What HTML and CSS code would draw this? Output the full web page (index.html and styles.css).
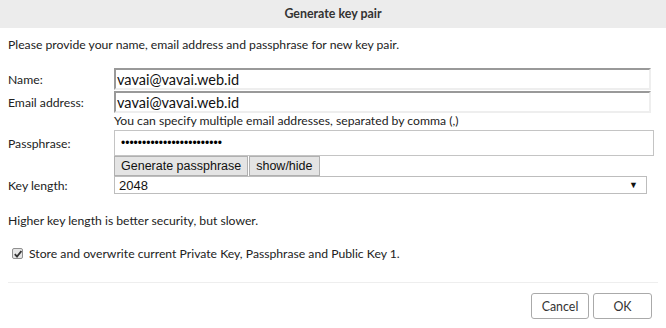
FILE: index.html
```html
<!DOCTYPE html>
<html lang="en">
<head>
    <meta charset="UTF-8">
    <title>Generate key pair</title>
    <link rel="stylesheet" href="styles.css">
</head>
<body>
    <div class="dialog">
        <div class="title-bar">Generate key pair</div>
        <div class="content">
            <p class="intro">Please provide your name, email address and passphrase for new key pair.</p>

            <div class="form-row name-row">
                <label class="label" for="nameInput">Name:</label>
                <input type="text" class="text-input" id="nameInput" value="vavai@vavai.web.id">
            </div>
            <div class="form-row">
                <label class="label" for="emailInput">Email address:</label>
                <input type="text" class="text-input" id="emailInput" value="vavai@vavai.web.id">
            </div>
            <div class="hint">You can specify multiple email addresses, separated by comma (,)</div>

            <div class="form-row pass-row">
                <label class="label" for="passInput">Passphrase:</label>
                <input type="password" class="pass-input" id="passInput" value="abcdefghijklmnopqrstuvwx">
            </div>
            <div class="pass-buttons">
                <button class="small-btn">Generate passphrase</button>
                <button class="small-btn">show/hide</button>
            </div>
            <div class="form-row key-row">
                <span class="label">Key length:</span>
                <div class="select-box">
                    <span>2048</span>
                    <span class="arrow">&#9660;</span>
                </div>
            </div>

            <p class="note">Higher key length is better security, but slower.</p>

            <label class="store-row">
                <span class="check-box">
                    <svg width="8" height="8" viewBox="0 0 8 8">
                        <path d="M0.8 4.2 L3 6.6 L7.4 1" fill="none" stroke="#333" stroke-width="1.8"/>
                    </svg>
                </span>
                <span>Store and overwrite current Private Key, Passphrase and Public Key 1.</span>
            </label>
        </div>
        <div class="footer">
            <button class="dialog-btn">Cancel</button>
            <button class="dialog-btn ok-btn">OK</button>
        </div>
    </div>
</body>
</html>
```

FILE: styles.css
```css
* {
    margin: 0;
    padding: 0;
    box-sizing: border-box;
}

body {
    width: 666px;
    height: 328px;
    background: #ffffff;
    font-family: Lato, 'Open Sans', sans-serif;
    font-size: 12.2px;
    color: #222222;
    overflow: hidden;
}

.title-bar {
    height: 28px;
    line-height: 28px;
    background: #ececec;
    text-align: center;
    font-weight: bold;
    font-size: 12.4px;
    color: #333333;
}

.content {
    padding: 0 8px;
}

.intro {
    margin-top: 9px;
    line-height: 16px;
}

.form-row {
    display: flex;
    align-items: center;
}

.name-row {
    margin-top: 15px;
}

.label {
    width: 106px;
    flex-shrink: 0;
}

.text-input {
    width: 537px;
    height: 22px;
    border-style: solid;
    border-width: 2px;
    border-color: #999999 #eeeeee #eeeeee #999999;
    padding: 0 1px;
    font-family: Lato, sans-serif;
    font-size: 14.5px;
    color: #111111;
    outline: none;
}

.form-row + .form-row {
    margin-top: 1px;
}

.hint {
    margin-left: 106px;
    line-height: 16px;
}

.pass-row {
    margin-top: 1px;
}

.pass-input {
    width: 540px;
    height: 26px;
    border: 1px solid #c4c4c4;
    padding: 0 6px;
    font-size: 12px;
    outline: none;
}

.pass-buttons {
    display: flex;
    margin-left: 106px;
    gap: 1px;
}

.small-btn {
    height: 20px;
    padding: 0 6px;
    background: #e4e4e4;
    border: 1px solid #b0b0b0;
    font-family: 'Liberation Sans', Arial, sans-serif;
    font-size: 12.5px;
    color: #111111;
}

.select-box {
    width: 533px;
    height: 18px;
    border: 1px solid #bdbdbd;
    display: flex;
    justify-content: space-between;
    align-items: center;
    padding: 0 8px 0 4px;
    font-family: 'Liberation Sans', Arial, sans-serif;
    font-size: 13px;
    color: #111111;
}

.arrow {
    font-size: 9px;
}

.note {
    margin-top: 19px;
    line-height: 16px;
}

.store-row {
    display: flex;
    align-items: center;
    gap: 6px;
    margin-top: 17px;
    margin-left: 4px;
}

.check-box {
    width: 11px;
    height: 11px;
    border: 1px solid #8f8f8f;
    border-radius: 2px;
    background: #e6e6e6;
    display: flex;
    align-items: center;
    justify-content: center;
}

.footer {
    margin: 21px 8px 0;
    border-top: 1px solid #eeeeee;
    display: flex;
    justify-content: flex-end;
    gap: 4px;
    padding: 10px 6px 0 0;
}

.dialog-btn {
    width: 58px;
    height: 26px;
    background: #ffffff;
    border: 1px solid #aaaaaa;
    border-radius: 3px;
    font-family: Lato, sans-serif;
    font-size: 12.4px;
    color: #333333;
}

.ok-btn {
    width: 59px;
}
```
